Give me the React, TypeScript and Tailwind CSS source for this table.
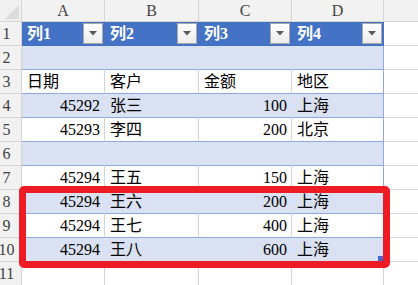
import { clsx } from 'clsx';

type Band = 'head' | 'band' | 'plain' | 'none';

interface RowData {
  n: number;
  band: Band;
  cells: [string, string, string, string];
}

const rows: RowData[] = [
  { n: 1, band: 'head', cells: ['列1', '列2', '列3', '列4'] },
  { n: 2, band: 'band', cells: ['', '', '', ''] },
  { n: 3, band: 'plain', cells: ['日期', '客户', '金额', '地区'] },
  { n: 4, band: 'band', cells: ['45292', '张三', '100', '上海'] },
  { n: 5, band: 'plain', cells: ['45293', '李四', '200', '北京'] },
  { n: 6, band: 'band', cells: ['', '', '', ''] },
  { n: 7, band: 'plain', cells: ['45294', '王五', '150', '上海'] },
  { n: 8, band: 'band', cells: ['45294', '王六', '200', '上海'] },
  { n: 9, band: 'plain', cells: ['45294', '王七', '400', '上海'] },
  { n: 10, band: 'band', cells: ['45294', '王八', '600', '上海'] },
  { n: 11, band: 'none', cells: ['', '', '', ''] },
];

const widths = ['w-[83px]', 'w-[94px]', 'w-[93px]', 'w-[92px]'];
const letters = ['A', 'B', 'C', 'D'];

const isNumber = (v: string) => /^\d+$/.test(v);

function FilterButton() {
  return (
    <div className="flex h-[21px] w-[20px] shrink-0 items-center justify-center border border-[#a9a9a9] bg-gradient-to-b from-white to-[#ececec]">
      <svg width="8" height="5" viewBox="0 0 8 5">
        <path d="M0 0 L8 0 L4 4.5 Z" fill="#595959" />
      </svg>
    </div>
  );
}

function Row({ row }: { row: RowData }) {
  const rowBg =
    row.band === 'head' ? 'bg-[#4472c4]' : row.band === 'band' ? 'bg-[#d9e1f2]' : 'bg-white';

  return (
    <div className="flex h-[24px]">
      {/* Row number */}
      <div className="flex w-[22px] shrink-0 items-center justify-center border-r border-b border-[#d4d4d4] bg-[#f2f2f2] pr-[8px] text-[16px] text-[#404040]">
        {row.n}
      </div>

      {row.cells.map((value, i) => {
        const last = i === 3;
        return (
          <div
            key={i}
            className={clsx(
              'flex shrink-0 items-center border-b border-r text-[16px]',
              widths[i],
              rowBg,
              row.band === 'head' && 'border-b-[#4472c4] font-bold text-white',
              row.band === 'head' && (last ? 'border-r-[#4472c4]' : 'border-r-[#4472c4]'),
              row.band === 'band' && 'border-b-[#8ea9db]',
              row.band === 'band' && (last ? 'border-r-[#8ea9db]' : 'border-r-[#d9e1f2]'),
              row.band === 'plain' && 'border-b-[#8ea9db]',
              row.band === 'plain' && (last ? 'border-r-[#8ea9db]' : 'border-r-[#d4d4d4]'),
              row.band === 'none' && 'border-b-[#d4d4d4] border-r-[#d4d4d4]',
              row.band !== 'head' && 'text-black',
              isNumber(value) ? 'justify-end pr-[4px]' : 'justify-between pl-[5px] pr-[1px]'
            )}
          >
            <span>{value}</span>
            {row.band === 'head' && <FilterButton />}
          </div>
        );
      })}

      <div className="flex-1 border-b border-[#d9d9d9] bg-white" />
    </div>
  );
}

export default function App() {
  return (
    <div
      className="relative h-[285px] w-[418px] overflow-hidden bg-white"
      style={{ fontFamily: '"Liberation Serif", "Noto Sans CJK SC", serif' }}
    >
      {/* Column letters */}
      <div className="flex h-[22px]">
        <div className="relative w-[22px] shrink-0 border-r border-b border-[#d4d4d4] bg-[#f0f0f0]">
          <svg className="absolute right-[2px] bottom-[2px]" width="14" height="14" viewBox="0 0 14 14">
            <path d="M14 0 L14 14 L0 14 Z" fill="#dcdcdc" />
          </svg>
        </div>
        {letters.map((l, i) => (
          <div
            key={l}
            className={clsx(
              'flex shrink-0 items-center justify-center border-r border-b border-[#d4d4d4] bg-[#f2f2f2] text-[16px] text-[#444]',
              widths[i]
            )}
          >
            {l}
          </div>
        ))}
        <div className="flex-1 border-b border-[#d4d4d4] bg-[#f2f2f2]" />
      </div>

      {rows.map((row) => (
        <Row key={row.n} row={row} />
      ))}

      {/* fill handle */}
      <div className="absolute left-[378px] top-[256px] h-[5px] w-[5px] bg-[#4a65c8]" />

      {/* red highlight box */}
      <div className="absolute left-[19px] top-[186px] h-[82px] w-[371px] rounded-[5px] border-[7px] border-[#ed1c24]" />
    </div>
  );
}
